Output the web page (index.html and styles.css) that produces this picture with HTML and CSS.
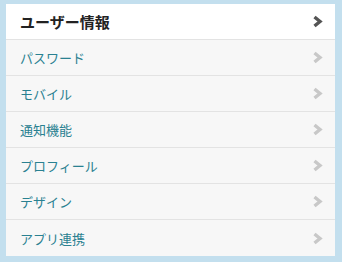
FILE: index.html
```html
<!DOCTYPE html>
<html lang="ja">
<head>
<meta charset="utf-8">
<link rel="stylesheet" href="styles.css">
</head>
<body>
<ul class="menu">
  <li class="item active"><span class="label">ユーザー情報</span><svg class="chev" viewBox="0 0 11 13"><path d="M2.5 2 L8 6.5 L2.5 11" /></svg></li>
  <li class="item"><span class="label">パスワード</span><svg class="chev" viewBox="0 0 11 13"><path d="M2.5 2 L8 6.5 L2.5 11" /></svg></li>
  <li class="item"><span class="label">モバイル</span><svg class="chev" viewBox="0 0 11 13"><path d="M2.5 2 L8 6.5 L2.5 11" /></svg></li>
  <li class="item"><span class="label">通知機能</span><svg class="chev" viewBox="0 0 11 13"><path d="M2.5 2 L8 6.5 L2.5 11" /></svg></li>
  <li class="item"><span class="label">プロフィール</span><svg class="chev" viewBox="0 0 11 13"><path d="M2.5 2 L8 6.5 L2.5 11" /></svg></li>
  <li class="item"><span class="label">デザイン</span><svg class="chev" viewBox="0 0 11 13"><path d="M2.5 2 L8 6.5 L2.5 11" /></svg></li>
  <li class="item"><span class="label">アプリ連携</span><svg class="chev" viewBox="0 0 11 13"><path d="M2.5 2 L8 6.5 L2.5 11" /></svg></li>
</ul>
</body>
</html>
```
FILE: styles.css
```css
html, body {
  margin: 0;
  padding: 0;
}
body {
  width: 342px;
  height: 262px;
  background: #c3dfee;
  padding: 4px 7px 6px 6px;
  box-sizing: border-box;
  font-family: "Noto Sans CJK JP", "Noto Sans", sans-serif;
}
.menu {
  list-style: none;
  margin: 0;
  padding: 0;
  background: #f7f7f7;
}
.item {
  display: flex;
  align-items: center;
  justify-content: space-between;
  height: 35px;
  padding: 0 12px 0 14px;
  border-bottom: 1px solid #e3e3e3;
  color: #2a8191;
  font-size: 13px;
}
.item:last-child {
  border-bottom: none;
  height: 36px;
}
.item.active {
  background: #ffffff;
  color: #222222;
  font-weight: bold;
  font-size: 15px;
}
.label {
  line-height: 1;
}
.chev {
  width: 11px;
  height: 13px;
  fill: none;
  stroke: #c8c8c8;
  stroke-width: 3.4;
}
.active .chev {
  stroke: #555555;
}
```
